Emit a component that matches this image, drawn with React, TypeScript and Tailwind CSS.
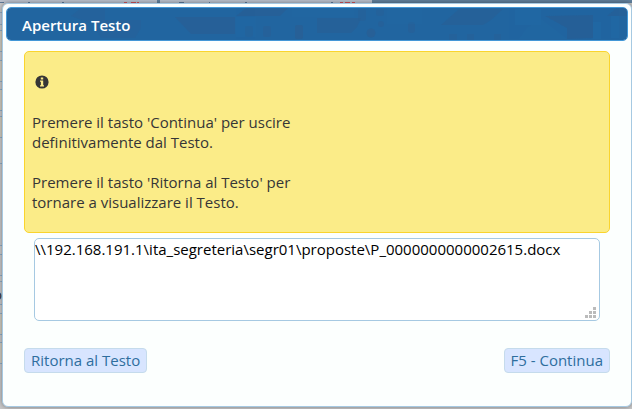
import React from "react";

const filePath = "\\\\192.168.191.1\\ita_segreteria\\segr01\\proposte\\P_0000000000002615.docx";

// form rows of the page under the dialog, only their edge shows
const fieldRows = [
  { top: "top-[12px]", height: "h-[13px]", color: "bg-[#bfc8d6]" },
  { top: "top-[30px]", height: "h-[22px]", color: "bg-[#cfccc0]" },
  { top: "top-[60px]", height: "h-[22px]", color: "bg-[#cfccc0]" },
  { top: "top-[89px]", height: "h-[22px]", color: "bg-[#cfccc0]" },
  { top: "top-[116px]", height: "h-[22px]", color: "bg-[#cfccc0]" },
  { top: "top-[137px]", height: "h-[27px]", color: "bg-[#cccccc]" },
  { top: "top-[245px]", height: "h-[10px]", color: "bg-[#cccccc]" },
  { top: "top-[275px]", height: "h-[7px]", color: "bg-[#cccccc]" },
  { top: "top-[304px]", height: "h-[10px]", color: "bg-[#cccccc]" },
  { top: "top-[313px]", height: "h-[22px]", color: "bg-[#cfccc0]" },
  { top: "top-[342px]", height: "h-[22px]", color: "bg-[#cfccc0]" },
];

function PageBehind() {
  return (
    <div aria-hidden="true" className="absolute inset-0 overflow-hidden bg-[#c8c8c9]">
      <div className="flex h-[3px] bg-[#5f7f9c]">
        <div className="w-[157px] bg-[#b9c0cd]" />
        <div className="ml-[3px] w-[212px] bg-[#b9c0cd]" />
      </div>
      <svg className="absolute left-0 top-0" width="380" height="3" shapeRendering="crispEdges">
        <path d="M0 2.5h4M28 2.5h2M62 2.5h2M179 2.5h5M209 2.5h1M245 2.5h2M331 2.5h2" stroke="#5e7998" />
        <path d="M124 2.5h3M131 2.5h5M137 2.5h2M340 2.5h3M345 2.5h5M352 2.5h3" stroke="#d35458" />
      </svg>
      {fieldRows.map((row) => (
        <div
          key={row.top}
          className={`absolute left-0 w-2 border-y border-[#92adc4] ${row.top} ${row.height} ${row.color}`}
        />
      ))}
      <span className="absolute right-full top-[284px] -mr-0.5 text-[15px] leading-5 text-[#363636]">o</span>
    </div>
  );
}

function HeaderTexture() {
  return (
    <svg
      aria-hidden="true"
      className="absolute inset-0 h-full w-full"
      viewBox="0 0 620 32"
      preserveAspectRatio="none"
    >
      <rect width="620" height="32" fill="#2165a0" />
      <g fill="#285f96">
        <path d="M64 8l10-8h24v12h36v8l-6 10H94l-8-14z" opacity=".45" />
        <path d="M168 9h60v17h-44z" opacity=".8" />
        <path d="M229 8l10-8h42l-8 8z" opacity=".75" />
        <rect x="238" y="18" width="8" height="11" rx="2" opacity=".6" />
        <rect x="256" y="18" width="8" height="11" rx="2" opacity=".6" />
        <rect x="288" y="17" width="8" height="14" rx="2" opacity=".9" />
        <path d="M310 10h44l-4 9-6 6h-34z" opacity=".7" />
        <rect x="351" y="1" width="8" height="12" rx="3" opacity=".5" />
        <rect x="369" y="1" width="8" height="7" rx="3" opacity=".5" />
        <circle cx="374" cy="16" r="3" opacity=".6" />
        <circle cx="364" cy="25" r="4.5" opacity=".9" />
        <rect x="401" y="14" width="7" height="11" rx="3" opacity=".6" />
        <path d="M434 17l18-16h44l-12 11-8 5z" opacity=".7" />
        <path d="M442 26h8v6h-8zM460 26h7v6h-7zM487 26h7v6h-7z" opacity=".5" />
        <path d="M538 8l48-1v23l-26 1V20z" opacity=".75" />
        <path d="M600 8l10-8h10v8z" opacity=".7" />
      </g>
      <g fill="#216ba6" opacity=".45">
        <path d="M508 1h26v16h-26z" />
        <path d="M229 9h20v20h-20zM285 0h62v9h-62zM380 0h35v16h-35z" opacity=".6" />
        <path d="M586 14h8v17h-8zM604 8h8v22h-8z" />
        <path d="M520 20l14-9 26 20h-48z" opacity=".5" />
      </g>
    </svg>
  );
}

function InfoIcon() {
  return (
    <svg width="14" height="14" viewBox="0 0 14 14" role="img" aria-label="Informazione">
      <circle cx="7" cy="7" r="6.6" fill="#363636" />
      <path d="M5.8 2.4h2.4v2H5.8zM5 5.6h3.2v4.6H9v1.2H5v-1.2h.9V6.8H5z" fill="#fceb8a" />
    </svg>
  );
}

// resize handle drawn as a small staircase of dots
function Grip() {
  return (
    <svg
      aria-hidden="true"
      className="pointer-events-none absolute bottom-[3px] right-1"
      width="11"
      height="11"
      shapeRendering="crispEdges"
    >
      <path d="M8 0h3v3H8zM4 4h3v3H4zM8 4h3v3H8zM0 8h3v3H0zM4 8h3v3H4zM8 8h3v3H8z" fill="#bbbbbb" />
    </svg>
  );
}

function DialogButton({ children }: { children: React.ReactNode }) {
  return (
    <button
      type="button"
      className="rounded border border-[#c5dbec] bg-[#d8e5ff] px-1.5 pb-0.5 pt-px text-[15px] leading-5 text-[#2e6e9e] hover:bg-[#c9dbff]"
    >
      {children}
    </button>
  );
}

export default function App() {
  return (
    <main className="relative min-h-screen pb-0.5 pl-0.5 pt-[3px] font-['Open_Sans',sans-serif]">
      <PageBehind />
      <section
        role="dialog"
        aria-labelledby="dialog-title"
        className="relative rounded-md border border-[#a6c9e2] bg-[#fcfffe] px-[3px] pb-[33px] pt-[3px] shadow-[0_0_5px_rgba(0,0,0,0.4)]"
      >
        <header className="relative h-[34px] overflow-hidden rounded-[5px] border border-[#4297d7]">
          <HeaderTexture />
          <h1 id="dialog-title" className="relative px-[15px] pt-[7px] text-[15px] font-semibold leading-5 text-white">
            Apertura Testo
          </h1>
        </header>

        <div className="px-[18px] pt-[10px]">
          <div className="rounded-[5px] border border-[#fad42e] bg-[#fbec88] px-[7px] pb-5 pt-5 text-[15px] leading-5 text-[#363636]">
            <div className="flex h-5 items-center px-[3px]">
              <InfoIcon />
            </div>
            <p className="mt-5">
              Premere il tasto 'Continua' per uscire
              <br />
              definitivamente dal Testo.
            </p>
            <p className="mt-5">
              Premere il tasto 'Ritorna al Testo' per
              <br />
              tornare a visualizzare il Testo.
            </p>
          </div>

          <div className="relative mx-[10px] mt-[5px]">
            <textarea
              aria-label="Percorso del testo"
              defaultValue={filePath}
              spellCheck={false}
              className="block h-[83px] w-full resize-none rounded-[5px] border border-[#a6c9e2] bg-white text-[15px] leading-5 text-black outline-none"
            />
            <Grip />
          </div>

          <div className="mt-[27px] flex justify-between">
            <DialogButton>Ritorna al Testo</DialogButton>
            <DialogButton>F5 - Continua</DialogButton>
          </div>
        </div>
      </section>
    </main>
  );
}
